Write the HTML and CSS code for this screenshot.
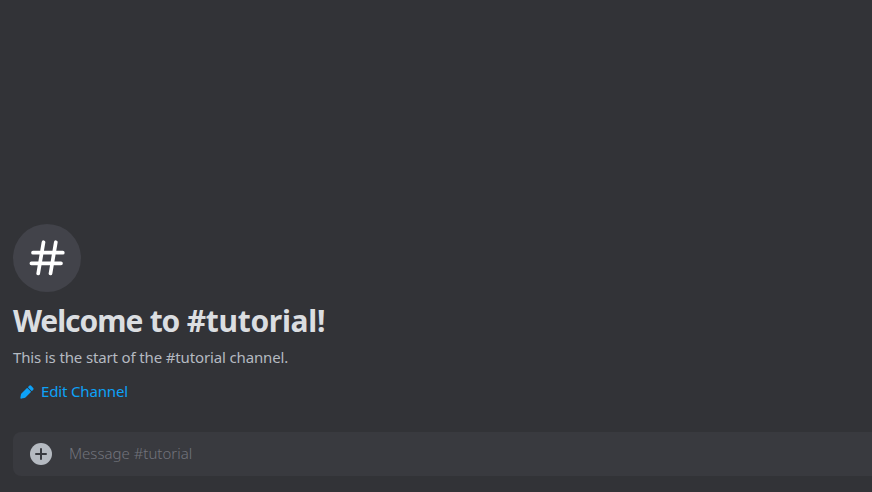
FILE: index.html
```html
<!DOCTYPE html>
<html lang="en">
<head>
<meta charset="utf-8">
<title>#tutorial</title>
<link rel="stylesheet" href="styles.css">
</head>
<body>
<main class="chat">
  <section class="welcome">
    <div class="channel-icon">
      <svg width="44" height="44" viewBox="0 0 44 44" fill="none" stroke="#fff" stroke-width="3.7" stroke-linecap="round"><path d="M18.5 6.2L13.2 37.5M30.8 6.2L25.5 37.5M8 16.7H37.8M6.4 27.3H36"/></svg>
    </div>
    <h1 class="title">Welcome to <span class="channel-name">#tutorial!</span></h1>
    <p class="subtitle">This is the start of the #tutorial channel.</p>
    <a class="edit">
      <svg width="16" height="16" viewBox="0 0 24 24" fill="currentColor"><path d="M13.96 5.46l4.58 4.58a1 1 0 0 0 1.42 0l1.38-1.38a2 2 0 0 0 0-2.82l-3.18-3.18a2 2 0 0 0-2.82 0l-1.38 1.38a1 1 0 0 0 0 1.42zM2.11 20.16l.73-4.22a3 3 0 0 1 .83-1.61l7.87-7.87a1 1 0 0 1 1.42 0l4.58 4.58a1 1 0 0 1 0 1.42l-7.87 7.87a3 3 0 0 1-1.6.83l-4.23.73a1.5 1.5 0 0 1-1.73-1.73z"/></svg>
      <span class="edit-label">Edit Channel</span>
    </a>
  </section>
  <div class="composer">
    <svg width="24" height="24" viewBox="0 0 24 24"><circle cx="12" cy="12" r="11" fill="#b5bac1"/><path d="M12 7v10M7 12h10" stroke="#383a40" stroke-width="2" stroke-linecap="round"/></svg>
    <span class="placeholder">Message #tutorial</span>
  </div>
</main>
</body>
</html>
```
FILE: styles.css
```css
* { box-sizing: border-box; }
body { margin: 0; background: #323337; font-family: "Noto Sans", sans-serif; }
.chat { height: 492px; padding: 0 0 16px 13px; display: flex; flex-direction: column; justify-content: flex-end; overflow: hidden; }
.channel-icon { width: 68px; height: 68px; border-radius: 50%; background: #42434a; display: flex; align-items: center; justify-content: center; }
.title { margin: 9px 0 6px; font-size: 30px; line-height: 40px; font-weight: 700; letter-spacing: -1.05px; word-spacing: 0.6px; color: #dbdee1; white-space: nowrap; }
.channel-name { letter-spacing: -0.3px; }
.subtitle { margin: 0; font-size: 15px; line-height: 20px; letter-spacing: -0.14px; color: #b5bac1; }
.edit { display: flex; align-items: center; gap: 6px; height: 32px; margin: 9px 0 24px 6px; color: #0da2f8; font-size: 15px; letter-spacing: -0.15px; }
.edit-label { padding-bottom: 2px; }
.composer { height: 44px; display: flex; align-items: center; gap: 16px; padding-left: 16px; background: #393a3f; border-radius: 8px 0 0 8px; }
.placeholder { padding-bottom: 2px; font-size: 15px; font-weight: 300; letter-spacing: 0; color: #72747c; }
```
